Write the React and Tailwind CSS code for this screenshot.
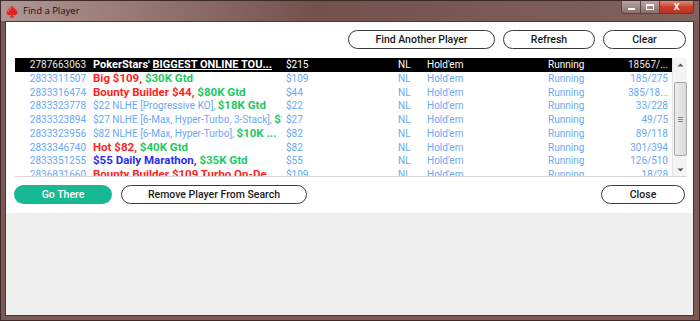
import React from "react";

const F = { fontFamily: "Roboto, 'Liberation Sans', sans-serif" };

const B = "font-bold text-[11.5px]";
const rows = [
  { id: "2787663063", name: [["PokerStars' ", `font-bold text-[11px] text-white`], ["BIGGEST ONLINE TOU...", `font-bold text-[11px] text-white underline`]], buy: "$215", pl: "18567/...", sel: true },
  { id: "2833311507", name: [["Big $109, ", `${B} text-[#ff2424]`], ["$30K Gtd", `${B} text-[#1ec864]`]], buy: "$109", pl: "185/275" },
  { id: "2833316474", name: [["Bounty Builder $44, ", `${B} text-[#ff2424]`], ["$80K Gtd", `${B} text-[#1ec864]`]], buy: "$44", pl: "385/18..." },
  { id: "2833323778", name: [["$22 NLHE [Progressive KO], ", "text-[#6aa8f6]"], ["$18K Gtd", `${B} text-[#1ec864]`]], buy: "$22", pl: "33/228" },
  { id: "2833323894", name: [["$27 NLHE [6-Max, Hyper-Turbo, 3-Stack], ", "text-[#6aa8f6]"], ["$25K Gtd", `${B} text-[#1ec864]`]], buy: "$27", pl: "49/75" },
  { id: "2833323956", name: [["$82 NLHE [6-Max, Hyper-Turbo], ", "text-[#6aa8f6]"], ["$10K ...", `${B} text-[#1ec864]`]], buy: "$82", pl: "89/118" },
  { id: "2833346740", name: [["Hot $82, ", `${B} text-[#ff2424]`], ["$40K Gtd", `${B} text-[#1ec864]`]], buy: "$82", pl: "301/394" },
  { id: "2833351255", name: [["$55 Daily Marathon, ", `${B} text-[#2c2cf2]`], ["$35K Gtd", `${B} text-[#1ec864]`]], buy: "$55", pl: "126/510" },
  { id: "2836831660", name: [["Bounty Builder $109 Turbo On-De...", `${B} text-[#ff2424]`]], buy: "$109", pl: "18/28" },
];

function Row({ r }) {
  const base = r.sel ? "text-white" : "text-[#6aa8f6]";
  return (
    <div className={`flex h-[13.75px] leading-[13.75px] text-[10px] whitespace-nowrap shrink-0 ${r.sel ? "bg-black" : ""}`}>
      <div className={`w-[71px] text-right ${r.sel ? "text-[#e8e8e8]" : base}`}>{r.id}</div>
      <div className="w-[200px] pl-[7px]">
        <div className="w-[189px] overflow-hidden">
          {r.name.map(([t, c], i) => (
            <span key={i} className={c}>{t}</span>
          ))}
        </div>
      </div>
      <div className={`w-[112px] ${base}`}>{r.buy}</div>
      <div className={`w-[29px] ${base}`}>NL</div>
      <div className={`w-[121px] ${base}`}>Hold'em</div>
      <div className={`w-[80px] ${base}`}>Running</div>
      <div className={`w-[40px] text-right ${r.sel ? "text-[#e8e8e8]" : base}`}>{r.pl}</div>
      <div className="w-[4px]" />
    </div>
  );
}

function Btn({ children, w, green }) {
  return (
    <div
      className={`h-[19px] rounded-full flex items-center justify-center text-[10.5px] font-medium ${
        green ? "bg-[#17b993] text-white" : "border border-[#3a3a3a] bg-white text-[#1a1a1a]"
      } ${w}`}
    >
      {children}
    </div>
  );
}

function Spade() {
  return (
    <svg width="12" height="13" viewBox="0 0 11 12">
      <path d="M5.5 0.5 C4 3 0.5 4.5 0.5 7 C0.5 8.6 1.8 9.5 3 9.5 C3.9 9.5 4.6 9 5 8.5 C4.8 9.8 4.2 10.8 3.2 11.5 L7.8 11.5 C6.8 10.8 6.2 9.8 6 8.5 C6.4 9 7.1 9.5 8 9.5 C9.2 9.5 10.5 8.6 10.5 7 C10.5 4.5 7 3 5.5 0.5 Z" fill="#e0241c" />
      <path d="M5.5 2 C4.6 3.6 2 4.8 1.8 6.6" stroke="#ff8a80" strokeWidth="0.8" fill="none" />
    </svg>
  );
}

function Scrollbar() {
  return (
    <div className="w-[15px] h-full bg-[#f4f4f4] border-l border-[#e6e6e6] flex flex-col items-center">
      <div className="h-[14px] w-full flex items-center justify-center">
        <svg width="7" height="4" viewBox="0 0 7 4"><path d="M0.5 3.5 L3.5 0.5 L6.5 3.5 Z" fill="#555" /></svg>
      </div>
      <div className="mt-[10px] h-[74px] w-[13px] rounded-[2px] border border-[#a8a8a8] bg-gradient-to-r from-[#ececec] to-[#dadada] flex items-center justify-center">
        <div className="flex flex-col gap-[1px]">
          <div className="w-[5px] h-px bg-[#888]" />
          <div className="w-[5px] h-px bg-[#888]" />
          <div className="w-[5px] h-px bg-[#888]" />
        </div>
      </div>
      <div className="flex-1" />
      <div className="h-[12px] w-full flex items-center justify-center">
        <svg width="7" height="4" viewBox="0 0 7 4"><path d="M0.5 0.5 L3.5 3.5 L6.5 0.5 Z" fill="#555" /></svg>
      </div>
    </div>
  );
}

export default function App() {
  return (
    <div style={F} className="w-[700px] h-[321px] bg-[#7a5956] flex flex-col border border-[#3e2a28] overflow-hidden">
      {/* title bar */}
      <div className="h-[20px] shrink-0 flex items-start bg-gradient-to-r from-[#b09795] via-[#75514e] via-45% to-[#80625f] relative">
        <div className="flex items-center h-[20px] pl-[5px] gap-[5px]">
          <Spade />
          <span className="text-[9.5px] text-[#111]" style={{ fontFamily: "'Open Sans', 'Liberation Sans', sans-serif" }}>Find a Player</span>
        </div>
        <div className="flex-1" />
        <div className="flex h-[14px] mr-[5px] -mt-px">
          <div className="w-[20px] h-full border border-[#5a4140] rounded-bl-[3px] bg-gradient-to-b from-[#b8a5a3] to-[#8a6f6c] flex items-center justify-center">
            <div className="w-[7px] h-[2px] bg-white mt-[4px]" />
          </div>
          <div className="w-[19px] h-full border-y border-r border-[#5a4140] bg-gradient-to-b from-[#b8a5a3] to-[#8a6f6c] flex items-center justify-center">
            <div className="w-[8px] h-[6px] border border-white border-t-2" />
          </div>
          <div className="w-[34px] h-full border-y border-r border-[#5a4140] rounded-br-[3px] bg-gradient-to-b from-[#e08a78] via-[#c8402c] to-[#b8331f] flex items-center justify-center text-white text-[9px] font-bold leading-none">
            X
          </div>
        </div>
      </div>

      {/* body */}
      <div className="flex-1 flex flex-col ml-[4px] mr-[5px] mb-[4px] border border-[#4b3533]">
        <div className="bg-white flex flex-col pt-[8px] pb-[9px] shrink-0">
          <div className="flex justify-end gap-[8px] pr-[7px]">
            <Btn w="w-[147px]">Find Another Player</Btn>
            <Btn w="w-[92px]">Refresh</Btn>
            <Btn w="w-[83px]">Clear</Btn>
          </div>
          <div className="mt-[9px] ml-[9px] mr-[6px] h-[119px] flex border-b border-[#d6d6d6]">
            <div className="flex-1 flex flex-col overflow-hidden">
              {rows.map((r) => (
                <Row key={r.id} r={r} />
              ))}
            </div>
            <Scrollbar />
          </div>
          <div className="mt-[8px] flex items-center px-[8px]">
            <Btn w="w-[98px]" green>Go There</Btn>
            <div className="w-[9px]" />
            <Btn w="w-[186px]">Remove Player From Search</Btn>
            <div className="flex-1" />
            <Btn w="w-[84px]">Close</Btn>
          </div>
        </div>
        <div className="flex-1 bg-[#efefef]" />
      </div>
    </div>
  );
}
